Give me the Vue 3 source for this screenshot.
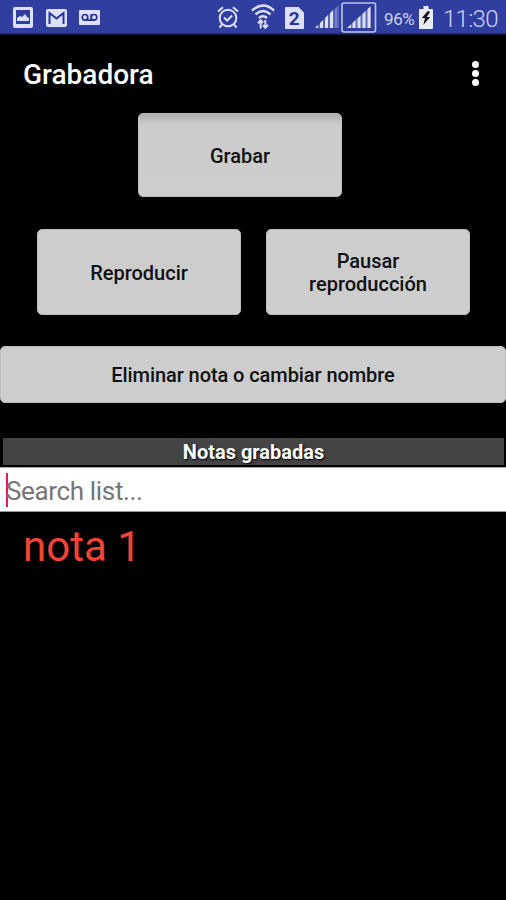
<template>
  <div class="screen">
    <!-- barra de estado -->
    <header class="status-bar">
      <div class="status-left">
        <svg width="20" height="21" viewBox="0 0 20 21">
          <path fill-rule="evenodd" fill="#dce0f8" d="M2 0H18Q20 0 20 2V19Q20 21 18 21H2Q0 21 0 19V2Q0 0 2 0ZM3 3V17H17V3Z" />
          <path fill="#dce0f8" d="M4 14V11L7 9L9 10L12 7L14 10L16 11V14Z" />
        </svg>
        <svg width="21" height="18" viewBox="0 0 21 18">
          <rect width="21" height="18" rx="2" fill="#dce0f8" />
          <path d="M3.5 15V4L10.5 9.5L17.5 4V15" fill="none" stroke="#26329a" stroke-width="2" />
        </svg>
        <svg width="21" height="15" viewBox="0 0 21 15">
          <rect width="21" height="15" rx="1" fill="#dce0f8" />
          <g fill="none" stroke="#26329a" stroke-width="1.7">
            <circle cx="6" cy="7.3" r="2.8" />
            <circle cx="15" cy="7.3" r="2.8" />
            <path d="M6 10.2H15M12.2 4V10" />
          </g>
        </svg>
      </div>
      <div class="status-right">
        <svg class="alarm" width="22" height="23" viewBox="0 0 22 23" fill="none" stroke="#dce0f8" stroke-width="2">
          <circle cx="11" cy="12" r="8.3" />
          <path d="M7 11.5L10.2 14.5L15.2 9.5M1 5.5L6 1.2M21 5.5L16 1.2M5 18.5L2.5 21.5M17 18.5L19.5 21.5" />
        </svg>
        <svg class="wifi" width="24" height="25" viewBox="0 0 24 25" fill="none" stroke="#dce0f8" stroke-width="2.4">
          <path d="M1 6.5Q12 -3.5 23 6.5M4.5 10.3Q12 3.7 19.5 10.3M8 14Q12 10.4 16 14" />
          <path stroke-width="2" d="M9.7 24.5V16.5M7 19.2L9.7 16.3L12 18.8M14.3 16V23.5M12 21.2L14.3 23.8L17 21" />
        </svg>
        <svg class="sim" width="19" height="22" viewBox="0 0 19 22">
          <path fill="#dce0f8" d="M1 0H13.5L19 5.5V21Q19 22 18 22H1Q0 22 0 21V1Q0 0 1 0Z" />
          <text x="9.2" y="18" text-anchor="middle" class="sim-number">2</text>
        </svg>
        <svg class="signal" width="25" height="25" viewBox="0 0 25 25">
          <path d="M0 24L24 1V24Z" fill="#7782cc" opacity=".55" />
          <path fill="#dce0f8" d="M0 24L3 21V24ZM5 24V19L8 16V24ZM10 24V14L13 11V24ZM15 24V9L18 6V24Z" />
          <path fill="#7480cc" d="M20 24V5L22 3V24Z" />
        </svg>
        <svg class="signal-active" width="36" height="31" viewBox="0 0 36 31">
          <rect x="1" y="1" width="33.5" height="29" rx="2" fill="none" stroke="#bdc4ed" stroke-width="1.6" />
          <path d="M6 26L30 4V26Z" fill="#7782cc" opacity=".65" />
          <path fill="#dce0f8" d="M6 26L10 22.3V26ZM11.5 26V21L14.5 18V26ZM16.5 26V16.5L19.5 13.7V26ZM21.5 26V12L24.5 9V26ZM26.5 26V7.3L29.5 4.5V26Z" />
        </svg>
        <span class="percent">96%</span>
        <svg class="battery" width="14" height="23" viewBox="0 0 14 23">
          <path fill="#e8ebfa" d="M4.5 0H9.5V3H13Q14 3 14 4V22Q14 23 13 23H1Q0 23 0 22V4Q0 3 1 3H4.5Z" />
          <path fill="#111" d="M8.8 5L2.8 12H6L4.3 19L11.2 11H7.8L11 6Z" />
        </svg>
        <span class="clock">11:30</span>
      </div>
    </header>

    <div class="title-bar">
      <h1>Grabadora</h1>
      <button class="menu" aria-label="Menú">
        <i></i>
        <i></i>
        <i></i>
      </button>
    </div>

    <main>
      <div class="row record-row">
        <button class="btn record" @click="addNote">Grabar</button>
      </div>
      <div class="row play-row">
        <button class="btn">Reproducir</button>
        <button class="btn">Pausar<br />reproducción</button>
      </div>
      <button class="btn wide">Eliminar nota o cambiar nombre</button>

      <h2>Notas grabadas</h2>
      <div class="search">
        <span class="caret"></span>
        <input v-model="search" type="text" placeholder="Search list..." />
      </div>
      <ul class="notes">
        <li v-for="note in filteredNotes" :key="note">{{ note }}</li>
      </ul>
    </main>
  </div>
</template>

<script setup>
import { ref, computed } from 'vue'

const search = ref('')
const notes = ref(['nota 1'])

const filteredNotes = computed(() =>
  notes.value.filter((note) => note.includes(search.value))
)

const addNote = () => {
  notes.value.push(`nota ${notes.value.length + 1}`)
}
</script>

<style>
body {
  margin: 0;
  background: #000;
}
</style>

<style scoped>
.screen {
  width: 506px;
  height: 900px;
  overflow: hidden;
  background: #000;
  color: #fff;
  font-family: Roboto, "Liberation Sans", sans-serif;
}

svg {
  display: block;
  flex: none;
}

button {
  font-family: inherit;
}

/* barra de estado */
.status-bar {
  display: flex;
  justify-content: space-between;
  height: 35px;
  box-sizing: border-box;
  padding: 0 8px 0 13px;
  background: linear-gradient(#303f9f 32px, #1c2768 34px, #050718 35px);
}

.status-left {
  display: flex;
  align-items: center;
  gap: 12px;
  height: 35px;
}

.status-left svg:first-child {
  margin-right: 1px;
}

.status-right {
  display: flex;
  align-items: center;
  height: 35px;
  color: #cdd3f4;
}

.wifi {
  margin: 0 10px 2px 12px;
}

.sim-number {
  font-size: 19px;
  font-weight: 700;
  fill: #26329a;
}

.signal {
  margin: 0 1px 2px 11px;
}

.percent {
  width: 31px;
  margin: 2px 4px 0 7px;
  font-size: 17px;
  letter-spacing: -0.4px;
  white-space: nowrap;
}

.clock {
  width: 55px;
  margin: 2px 0 0 10px;
  font-size: 24px;
  font-weight: 300;
  letter-spacing: -0.7px;
  white-space: nowrap;
}

/* título */
.title-bar {
  display: flex;
  align-items: center;
  justify-content: space-between;
  height: 78px;
  padding: 0 27px 0 23px;
}

h1 {
  margin: 0;
  font-size: 28px;
  font-weight: 500;
}

.menu {
  display: flex;
  flex-direction: column;
  gap: 2px;
  padding: 0 0 1px;
  border: none;
  background: none;
}

.menu i {
  width: 7px;
  height: 7px;
  border-radius: 50%;
  background: #fff;
}

/* botones */
main {
  display: flex;
  flex-direction: column;
}

.row {
  display: flex;
}

.record-row {
  padding-left: 138px;
}

.play-row {
  gap: 25px;
  margin-top: 32px;
  padding-left: 37px;
}

.btn {
  width: 204px;
  height: 86px;
  padding: 2px 0 0;
  border: 1px solid #bdbdbd;
  border-radius: 5px;
  background: #cdcdcd;
  color: #101010;
  font-size: 20px;
  font-weight: 500;
  line-height: 23px;
}

.record {
  height: 84px;
  background: linear-gradient(#acacac, #cbcbcb 10px, #cdcdcd);
}

.wide {
  width: 506px;
  height: 57px;
  margin-top: 31px;
  letter-spacing: -0.08px;
}

/* lista de notas */
h2 {
  height: 27px;
  margin: 35px 2px 0 3px;
  background: #444;
  font-size: 20px;
  font-weight: 700;
  line-height: 29px;
  text-align: center;
  text-shadow: 1px 1px 2px #000;
}

.search {
  display: flex;
  align-items: center;
  height: 45px;
  box-sizing: border-box;
  margin-top: 2px;
  padding-left: 6px;
  border-top: 1px solid #aaa;
  border-bottom: 1px solid #999;
  background: #fff;
}

.caret {
  width: 2px;
  height: 34px;
  background: #ec1561;
}

.search input {
  flex: 1;
  height: 32px;
  padding: 2px 0 0;
  margin-left: -2px;
  border: none;
  outline: none;
  background: transparent;
  font-family: inherit;
  font-size: 26px;
  letter-spacing: -0.35px;
}

.search input::placeholder {
  color: #757575;
}

.notes {
  margin: 0;
  padding: 9px 23px;
  list-style: none;
}

.notes li {
  color: #f44336;
  font-size: 42px;
  line-height: 52px;
}
</style>
